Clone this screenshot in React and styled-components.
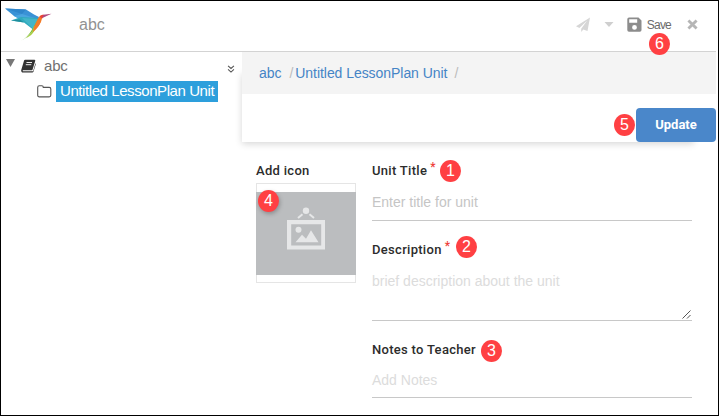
import React from "react";
import styled, { createGlobalStyle } from "styled-components";

const Global = createGlobalStyle`
  * { box-sizing: border-box; }
  body { margin: 0; background: #fff; font-family: "Liberation Sans", Arial, sans-serif; }
  svg { display: block; flex: none; }
`;

const Frame = styled.div`
  width: 719px;
  height: 416px;
  border: 1px solid #000;
  padding-right: 2px;
  display: flex;
  flex-direction: column;
  overflow: hidden;
  background: #fff;
`;

const Header = styled.header`
  height: 51px;
  flex: none;
  border-bottom: 1px solid #d3d3d3;
  display: flex;
  align-items: center;
  padding: 0 18px 3px 4px;
`;

const AppTitle = styled.h1`
  margin: 0 auto 0 27px;
  font-size: 16px;
  line-height: 20px;
  font-weight: 400;
  color: #929292;
`;

const Actions = styled.div`
  display: flex;
  align-items: center;
  gap: 13px;
`;

const SaveButton = styled.div`
  position: relative;
  display: flex;
  align-items: center;
  gap: 5px;
  margin-right: 3px;
  font-size: 12px;
  line-height: 12px;
  letter-spacing: -0.8px;
  color: #6b6b6b;
`;

const Badge = styled.span`
  position: absolute;
  left: ${(p) => p.$x}px;
  top: ${(p) => p.$y}px;
  z-index: 2;
  width: 21px;
  height: 22px;
  border-radius: 50%;
  background: #ff4043;
  color: #fff;
  font: 400 16px/22px "Liberation Sans", Arial, sans-serif;
  letter-spacing: 0;
  text-align: center;
  ${(p) => p.$shadow && "box-shadow: 1px 2px 4px rgba(0, 0, 0, 0.25);"}
`;

const Body = styled.div`
  flex: 1;
  display: flex;
  min-height: 0;
`;

const Sidebar = styled.nav`
  width: 241px;
  flex: none;
  padding-top: 2px;
`;

const TreeRow = styled.div`
  display: flex;
  align-items: center;
  height: ${(p) => (p.$child ? 27 : 24)}px;
  padding-left: ${(p) => (p.$child ? 36 : 5)}px;
  padding-right: 7px;
`;

const TreeName = styled.span`
  margin: -2px auto 0 8px;
  font-size: 15px;
  letter-spacing: -0.2px;
  color: #707070;
`;

const Selected = styled.span`
  margin-left: 4px;
  height: 21px;
  width: 162px;
  padding-left: 4px;
  background: #2d9fdc;
  color: #fff;
  font-size: 15px;
  line-height: 20px;
  letter-spacing: -0.42px;
  white-space: nowrap;
`;

const Content = styled.main`
  flex: 1;
  min-width: 0;
`;

const TopPanel = styled.section`
  position: relative;
  z-index: 0;
  height: 90px;
  &::after {
    content: "";
    position: absolute;
    z-index: -1;
    inset: 20px 22px 0 0;
    box-shadow: 0 2px 7px rgba(0, 0, 0, 0.16);
  }
`;

const Breadcrumb = styled.div`
  height: 42px;
  background: #f4f4f4;
  padding: 0 17px;
  font-size: 14px;
  line-height: 43px;
  letter-spacing: -0.05px;
  color: #4584c6;
  white-space: pre;
`;

const Slash = styled.span`
  color: #bcbcbc;
  margin-left: ${(p) => p.$gap}px;
  margin-right: 2px;
`;

const Toolbar = styled.div`
  height: 48px;
  background: #fff;
  display: flex;
  justify-content: flex-end;
  align-items: flex-end;
`;

const UpdateButton = styled.button`
  width: 80px;
  height: 34px;
  border: 0;
  padding: 0;
  border-radius: 4px;
  background: #4a87ca;
  color: #fff;
  font: 700 13px/34px Roboto, sans-serif;
`;

const Form = styled.div`
  display: flex;
  gap: 16px;
  padding: 20px 24px 0 14px;
`;

const IconColumn = styled.div`
  position: relative;
  width: 100px;
  flex: none;
`;

const Fields = styled.div`
  flex: 1;
`;

const Field = styled.div`
  position: relative;
  height: ${(p) => p.$h}px;
`;

const Label = styled.label`
  display: block;
  height: 17px;
  font: 500 13px/17px Roboto, sans-serif;
  letter-spacing: 0.3px;
  color: #2c2c2c;
`;

const Star = styled.span`
  color: #ee3f3a;
  font-size: 12px;
  line-height: 12px;
  margin-left: 3px;
  position: relative;
  top: -4px;
`;

const Input = styled.div`
  position: relative;
  height: ${(p) => p.$h}px;
  padding-top: ${(p) => p.$top || 15}px;
  border-bottom: 1px solid #c8c8c8;
  font-size: 14px;
  line-height: 17px;
  color: ${(p) => p.$color || "#dcdcdc"};
`;

const Grip = styled.svg`
  position: absolute;
  right: 1px;
  bottom: 1px;
`;

const Thumb = styled.div`
  height: 100px;
  margin-top: 4px;
  border: 1px solid #e5e5e5;
  padding: 8px 0;
`;

const Placeholder = styled.div`
  height: 83px;
  margin: 0 -1px;
  background: #bbbdbf;
  display: flex;
  justify-content: center;
  padding-top: 14px;
`;

const Bird = () => (
  <svg width="47" height="36" viewBox="0 0 47 36">
    <path d="M0 1.500L21 2.500l8 5 5 2.500-1 4-16-1L9 9z" fill="#3a92d6" />
    <path d="M0 1.500L21 2.500 17 7z" fill="#2f86cb" />
    <path d="M9 9l8-2 16 5-3 3-14-2z" fill="#4aa5e0" />
    <path d="M6 13.500l10-3.500 17 1-5 11.500-9-7z" fill="#2fa9bd" />
    <path d="M6 13.500l9-1 4 3z" fill="#208f9d" />
    <path d="M17 11l16 1-5 10z" fill="#43b5c8" />
    <path d="M33 11.500C34.500 8.500 37 7.500 39.500 8l-2.500 3.500c-1 5-3.500 8.500-8 12l-1-2z" fill="#f47a25" />
    <path d="M34.500 9.500C36 8 38 7.500 39.500 8L37 11.500z" fill="#ea4136" />
    <path d="M38.500 7.800l8-1-6.500 3-3 1.500z" fill="#b0487f" />
    <path d="M33 12c-1 6-3 9.500-6 13-3 3.500-6 6.500-11.500 9C22 31 25 26 28 21z" fill="#7cbb3c" />
    <path d="M29 19c-1 5-4 9-8 12 5-2 8-5 10-11z" fill="#a9cf45" />
    <path d="M33 12l-4 8-1 5c4-3 7-7 8-12z" fill="#f37b29" />
  </svg>
);

const Plane = () => (
  <svg width="16" height="16" viewBox="0 0 16 16" fill="#d6d6d6">
    <path d="M15 .5L1 9.300l3.400 1.600 7.800-7.300-6 8.200V15l2.100-2.600 4.200 1.700z" />
  </svg>
);

const Caret = () => (
  <svg width="10" height="5" viewBox="0 0 10 5" fill="#cfcfcf">
    <path d="M.5 0h9L5 5z" />
  </svg>
);

const Disk = () => (
  <svg width="15" height="15" viewBox="0 0 15 15">
    <path fillRule="evenodd" fill="#8c8c8c" d="M2 .5h9.500L14.500 3.500V13a1.700 1.700 0 0 1-1.700 1.700H2A1.700 1.700 0 0 1 .3 13V2.200A1.700 1.700 0 0 1 2 .5zM2.200 2.300v3.400h8V2.300zM7.500 8a2.400 2.400 0 1 0 0 4.800 2.400 2.400 0 0 0 0-4.800z" />
  </svg>
);

const Cross = () => (
  <svg width="11" height="11" viewBox="0 0 10 10">
    <path d="M1.300 1.300l7.400 7.400M8.700 1.300L1.300 8.700" stroke="#b5b5b5" strokeWidth="2.600" />
  </svg>
);

const Expand = styled.svg`
  margin-top: -7px;
  margin-right: 6px;
`;

const Book = () => (
  <svg width="15" height="14" viewBox="0 0 15 14">
    <path d="M4.200.8h9.200c.8 0 1 .5.8 1.100l-2.600 8.500c-.2.600-.6.800-1.200.8H2.100c-.6 0-.7.900.3 1.100h8.800c.6 0 .9-.4 1.100-.9l2.200-7.200c.4.400.4.800.2 1.400l-2.200 6.800c-.2.700-.8 1.200-1.600 1.200H2.200C.5 13.600-.1 12 .3 10.800L3 1.800C3.200 1.200 3.500.8 4.200.8z" fill="#333" />
    <path d="M5.500 3.500h5.500M4.800 5.700h5.500" stroke="#eee" />
  </svg>
);

const Folder = () => (
  <svg width="15" height="13" viewBox="0 0 15 13" fill="none" stroke="#555" strokeWidth="1.100">
    <path d="M.7 2.500c0-1 .6-1.700 1.600-1.700h2.500c.9 0 1.500.6 1.500 1.600h5.900c1 0 1.600.6 1.600 1.600v6.300c0 1-.6 1.600-1.600 1.600H2.300c-1 0-1.600-.6-1.600-1.600z" />
  </svg>
);

const ChevronIcon = styled.svg`
  position: relative;
  top: 3px;
`;

const Chevrons = () => (
  <ChevronIcon width="8" height="8" viewBox="0 0 8 9" fill="none" stroke="#555" strokeWidth="1.200">
    <path d="M.7.900L4 3.900 7.300.9M.7 4.900L4 7.900l3.300-3" />
  </ChevronIcon>
);

const Picture = () => (
  <svg width="40" height="45" viewBox="0 0 40 45" fill="#e6e7e8">
    <circle cx="20" cy="4.700" r="3.200" />
    <path d="M16.500 8.200L12 12M23.500 8.200L28 12" stroke="#e6e7e8" strokeWidth="2" />
    <path fillRule="evenodd" d="M1 14h38v29.500H1zM5.200 18.200v21.200h30V18.200z" />
    <circle cx="12.500" cy="23.800" r="3" />
    <path d="M9.500 36.200l6.500-7.500 4 4 5-8.500 7.500 12z" />
  </svg>
);

export default function App() {
  return (
    <Frame>
      <Global />
      <Header>
        <Bird />
        <AppTitle>abc</AppTitle>
        <Actions>
          <Plane />
          <Caret />
          <SaveButton>
            <Disk />
            Save
            <Badge $x={22} $y={16}>6</Badge>
          </SaveButton>
          <Cross />
        </Actions>
      </Header>
      <Body>
        <Sidebar>
          <TreeRow>
            <Expand width="9" height="8" viewBox="0 0 9 8">
              <path d="M0 0h9L4.500 8z" fill="#777" />
            </Expand>
            <Book />
            <TreeName>abc</TreeName>
            <Chevrons />
          </TreeRow>
          <TreeRow $child>
            <Folder />
            <Selected>Untitled LessonPlan Unit</Selected>
          </TreeRow>
        </Sidebar>
        <Content>
          <TopPanel>
            <Breadcrumb>
              abc<Slash $gap={8}>/</Slash>Untitled LessonPlan Unit<Slash $gap={7}>/</Slash>
            </Breadcrumb>
            <Toolbar>
              <UpdateButton>Update</UpdateButton>
              <Badge $x={372} $y={62}>5</Badge>
            </Toolbar>
          </TopPanel>
          <Form>
            <IconColumn>
              <Label>Add icon</Label>
              <Thumb>
                <Placeholder><Picture /></Placeholder>
              </Thumb>
              <Badge $x={2} $y={28} $shadow>4</Badge>
            </IconColumn>
            <Fields>
              <Field $h={79}>
                <Label>Unit Title<Star>*</Star></Label>
                <Input $h={42} $color="#c5c5c5">Enter title for unit</Input>
                <Badge $x={68} $y={-2}>1</Badge>
              </Field>
              <Field $h={100}>
                <Label>Description<Star>*</Star></Label>
                <Input $h={63}>
                  brief description about the unit
                  <Grip width="9" height="9" viewBox="0 0 9 9" stroke="#555" strokeWidth="1">
                    <path d="M.5 8.500l8-8M5 8.500L8.500 5" />
                  </Grip>
                </Input>
                <Badge $x={84} $y={-5}>2</Badge>
              </Field>
              <Field $h={60}>
                <Label>Notes to Teacher</Label>
                <Input $h={40} $top={14}>Add Notes</Input>
                <Badge $x={109} $y={-1}>3</Badge>
              </Field>
            </Fields>
          </Form>
        </Content>
      </Body>
    </Frame>
  );
}
